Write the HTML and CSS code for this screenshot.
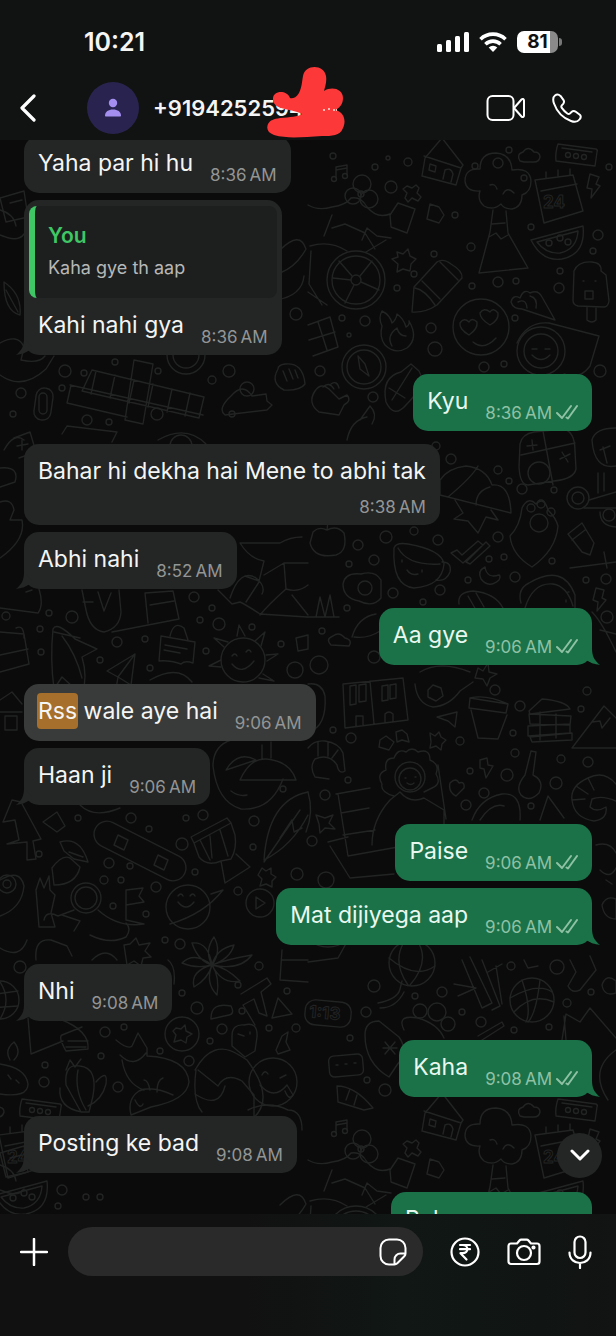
FILE: index.html
```html
<!DOCTYPE html>
<html lang="en">
<head>
<meta charset="utf-8">
<meta name="viewport" content="width=device-width, initial-scale=1">
<title>Chat</title>
<link rel="stylesheet" href="styles.css">
</head>
<body>
<div class="app">
  <header class="top">
    <div class="status">
      <span class="clock">10:21</span>
      <div class="status-icons">
        <svg width="32" height="20" viewBox="0 0 32 20" fill="#fff" aria-hidden="true"><rect x="0" y="12" width="5" height="8" rx="1.5"/><rect x="9" y="8" width="5" height="12" rx="1.5"/><rect x="18" y="4" width="5" height="16" rx="1.5"/><rect x="27" y="0" width="5" height="20" rx="1.5"/></svg>
        <svg width="28" height="20" viewBox="0 0 28 20" fill="none" stroke="#fff" stroke-width="3.6" aria-hidden="true"><path d="M1.5 7.2a18 18 0 0 1 25 0M6.4 12.2a11 11 0 0 1 15.200 0"/><path d="M14 20l-4.300-4.400a6.200 6.200 0 0 1 8.600 0z" fill="#fff" stroke="none"/></svg>
        <div class="battery"><span>81</span></div>
      </div>
    </div>
    <div class="bar">
      <button class="icon-btn back" aria-label="Back"><svg width="16" height="28" viewBox="0 0 16 28" fill="none" stroke="#fff" stroke-width="3.2" stroke-linecap="round" stroke-linejoin="round"><path d="M14 2L2 14l12 12"/></svg></button>
      <div class="avatar"><svg width="18" height="20" viewBox="0 0 18 20" fill="#a48ff0" aria-hidden="true"><circle cx="9" cy="5" r="4.200"/><path d="M1 17.500c0-3.800 3.500-6 8-6s8 2.200 8 6c0 .6-.4 1-1 1H2c-.6 0-1-.4-1-1z"/></svg></div>
      <h1 class="name">+9194252594
        <svg class="scribble" width="80" height="72" viewBox="0 0 80 72" aria-hidden="true"><path fill="#fd3839" d="M7 32c0-9 14-9 17-1 2 1 6 0 9-5 3-6 3-12 4-17C39-3 58-3 60 9c1 6-1 11-2 15 8-5 19-2 19 7 0 6-3 9-7 12 9 3 10 12 7 18-3 8-11 8-21 8-19 1-34 3-48-1-6-2-8-6-6-11 2-4 6-5 12-6 10-1 18-1 22-4-3-2-8-3-13-4-8-2-16-3-16-11z"/><path d="M57 43h3m2-1h2m3 1h4" stroke="#ffb8b4" stroke-width="2" stroke-dasharray="2 1"/></svg>
      </h1>
      <button class="icon-btn" aria-label="Video call"><svg width="40" height="28" viewBox="0 0 40 28" fill="none" stroke="#fff" stroke-width="2" stroke-linejoin="round"><rect x="1.500" y="2" width="26" height="24" rx="5"/><path d="M28 14l7.500-8.500c1-1 2.500-.6 2.500 1v15c0 1.600-1.500 2-2.500 1z"/></svg></button>
      <button class="icon-btn call" aria-label="Voice call"><svg width="30" height="30" viewBox="0 0 30 30" fill="none" stroke="#fff" stroke-width="2" stroke-linejoin="round"><path d="M3 2.500C1 4 .8 7 2 10.500c3 8.500 9 14.500 17 17.500 3.500 1.300 6.500 1 8.500-1.500 1.600-2 1.600-3.500.3-4.700l-4-3c-1.500-1.100-3-1-4.300.2l-1.600 1.600c-.8.700-1.700.6-2.600-.1-2.200-1.600-4-3.400-5.500-5.600-.6-.9-.7-1.700 0-2.500l1.400-1.500c1-1.200 1.100-2.600.2-4l-2.900-4C6.500 1.200 4.700 1.200 3 2.500z"/></svg></button>
    </div>
  </header>

  <main class="chat">
    <svg class="wallpaper" viewBox="0 140 616 1074" preserveAspectRatio="xMidYMin slice" aria-hidden="true">
      <defs>
        <g id="band">
          <path d="M425 158l17-20 21 27-2 3-37-12M425 158l-3 18 34 9 5-17M430 164l6 2-1 6-6-2zM443 179l2-9q6-3 8 4l-2 8"/>
          <path d="M558 144l38 5q2 1 1 3l-2 14-39-5q-1-8 2-17zM562 148l30 4"/><circle cx="568" cy="155" r="2.500"/><circle cx="576" cy="156" r="2.500"/><circle cx="584" cy="157" r="2.500"/>
          <path d="M520 161q-4-7 3-9 5-7 11 0 6 0 6 5-1 5-6 5h-10z"/>
          <path d="M336 178v-11l11-2v10M336 170l11-2"/><circle cx="334" cy="179" r="2.500"/><circle cx="345" cy="176" r="2.500"/>
          <path d="M407 186l5 2 4-3 3 3-2 5 4 4-3 4-6-3-4 4-3-4 2-5-4-4z"/>
          <circle cx="362" cy="184" r="9"/><circle cx="353" cy="196" r="8"/><circle cx="369" cy="199" r="9"/><circle cx="361" cy="194" r="3"/>
          <path d="M480 191q-14 1-15-10 0-13 15-12 0-16 16-16 15 1 16 17 18-3 19 11 0 11-9 14 0 12-10 14-8 0-11-5-8 7-17 2-7-6-4-15zM490 185q5-2 7 4M503 194q4-8 11-1"/>
          <path d="M493 210l-3 22-11 41 49-5-20-35-2-22M492 224l13-1M489 237l7-4 5 6 7-4"/>
          <path d="M535 180l38-5 10 36-39 12zM541 191l36-7M546 178v-6M558 176v-6M570 175v-6"/><text x="543" y="208">24</text>
          <path d="M590 174l9 3-3 7 4 2-9 12 1-9-5-1z"/>
          <path d="M531 240l52-14q3 28-21 33-20 3-31-19zM537 242l41-11q-1 18-18 22-14 1-23-11z"/><circle cx="549" cy="243" r="3"/><circle cx="560" cy="238" r="3"/><circle cx="568" cy="242" r="3"/>
          <path d="M308 205q10 6 24 2 14-2 19-9 10-2 16 9 10 12 23 7M390 215l8-12 17 6-8 24-16-6zM332 215l-8 21M332 228l13-4 20 9 10 16M362 240l5-12 10 8 14 2"/>
          <circle cx="356" cy="280" r="29"/><circle cx="356" cy="280" r="24"/><circle cx="356" cy="280" r="5"/><path d="M352 276l-13-15M360 276l12-15M361 282l18 8M354 285l-9 18M351 280l-18-2M310 246q20-6 37 5M311 251l-2 33 13 21M308 292l19 13M366 252l20-12"/>
          <path d="M412 312l2-25 23-25q6-4 14 2 12 7 11 14l-25 27q-12 8-25 7zM415 288q10 2 20 17M422 281l18 18M440 262l18 18"/>
          <path d="M430 204l9 3 5 8-5 8-12-4zM397 252l6 2 5-5 2 7 6 3-5 5-1 7-7-2-6 3 1-8-6-5 6-2z"/>
          <path d="M573 300l1-29q4-10 18-9 10 1 9 9l5 4 3 26q-1 6-5 6l-26-1q-5-1-5-6zM587 307v13q5 4 9 0v-13M585 291h8v8h-8zM583 281h1M595 281h1"/>
          <path d="M511 302q2-8 9-4 4-10 10-5 8-4 12 4l13 23-33-11q-9 0-11-7zM518 302q8-4 9 6M530 296q8 2 6 12"/>
          <circle cx="481" cy="327" r="28"/><path d="M469 335q-10-6-9-12 4-6 9-1 3-5 8 0 1 7-8 13zM490 325q-10-6-10-12 4-6 10-1 3-5 8 1 1 7-8 12zM473 342q11 9 23-4"/>
          <path d="M382 326q-4-8 0-15 8 4 10 12 4-3 5-9 7 5 9 13 4-2 3-6 10 17-2 27-12 7-22-3-6-8-3-19zM392 346q-6-10 5-18 2 8 9 8"/>
          <path d="M308 325l22-8 8 30-25 9M309 340l26-8M318 322l9 28"/>
          <circle cx="364" cy="367" r="22"/><circle cx="364" cy="367" r="17"/><path d="M358 356l7 8 4 12-9-7z"/>
          <path d="M315 391q6-9 14-2l10 10 8-4q5 6-3 10l-5 10-20-3q-12-9-4-21zM323 387q6-6 11 2M331 384q6-4 8 4"/>
          <circle cx="541" cy="351" r="24"/><circle cx="541" cy="351" r="17"/><path d="M517 343q10-22 32-20l50 13-9 30q-10 14-26 8M532 349h5M545 349h5M532 355q9 9 18 0"/>
          <path d="M386 402q-5-25 15-30l10-8 8 7q8 13-13 34-12 14-20-3zM392 400l20-32M389 388l16 10"/>
          <path d="M360 420l10-14q8 8 2 18M347 440q4-20 20-23"/>

          <path d="M92 370l112 27-5 21-117-27zM96 371l-5 23M115 375l-5 23M134 380l-5 23M153 384l-5 23M172 389l-5 23M190 393l-5 23M134 360l19 4-10 60-18-4zM70 385l133 30M71 385l-4 18 60 14"/>
          <rect x="35" y="388" width="17" height="32" rx="8" transform="rotate(8 43 404)"/><rect x="39" y="393" width="8" height="21" rx="4"/>
          <path d="M0 343q18-10 24 4l-3 13q18 4 24-4M0 375q22 16 46-6l8-13M0 235q18 8 24-1M4 282q18 12 16 33-16-4-16-33zM6 290l12 22"/>
          <circle cx="186" cy="355" r="19"/><circle cx="186" cy="355" r="13"/><path d="M280 250q20-20 26-1-10 18-26 24M276 300q26-4 28-24"/>
          <path d="M278 369q-8 14 6 21 16 1 21-6-2-22-20-20-7 1-7 5zM283 371l4 10M289 369l4 10M295 370l3 8"/>
          <path d="M231 396q12-14 21 0l14-2 1 7 5 4-5 5-42 5q-8-6 6-19z"/><circle cx="247" cy="389" r="7"/><path d="M0 198l24-7 4 26-22 5zM10 203l12-3"/><path d="M0 210q14 4 16 16"/>
          <path d="M158 440q28-16 48 4M62 434l5-8 50 6-5 10M14 438l16-6 6 20-17 6M22 440v10M17 446l11-2"/><circle cx="181" cy="446" r="11"/>
        </g>
      </defs>
      <g class="doodle">
        <use href="#band"/><use href="#band" y="955"/><use href="#band" x="-536" y="955"/>
        <path d="M0 468q20-2 15 14l-15 5M0 502q12-4 14 8l-4 10h12q4 20-22 38M4 450q10-18 20-10"/>
        <path d="M440 480q8-12 26-14 20 2 26 19 18-2 19 28l-71-18zM448 497q24-20 30-31M490 487q-14 4-14 18M455 500l8 13-9 6 14 2 10 12 8-16 12 3-7-10"/>
        <path d="M520 444q2-10 14-12l29-3q12 2 12 22l1 18q-2 10-22 12l-26 4q-8 0-9-18zM521 455l54-12M543 431l10 54M527 446l10-1M532 440l1 10M560 459l10-5M562 452l6 10"/><circle cx="539" cy="473" r="11"/>
        <path d="M592 440q3-12 24-12M592 440q2 30 24 26M603 447l4 16M600 450l10-4"/>
        <circle cx="578" cy="498" r="11"/><circle cx="578" cy="498" r="6"/><path d="M589 500l27-8M598 473v20M604 473v18M584 508h32M600 512q0 14 16 15"/><circle cx="609" cy="515" r="6"/>
        <path d="M510 536q10-10 12-28 6-12 14-4 8-8 12 6 8 8 10 16-2 24-26 41-20-12-22-31z"/><circle cx="539" cy="523" r="9"/><circle cx="531" cy="508" r="4"/><circle cx="541" cy="504" r="4"/><circle cx="551" cy="512" r="4"/>
        <path d="M394 548q2-6 14-4 34 6 36 20-2 22-30 24-22-2-20-40zM398 548q10 18 42 16M442 562q10 0 8 10-4 10-14 8"/><path d="M402 560v2M422 570v2M407 570q4 6 11 4"/>
        <path d="M451 553l6-3 5 5 16-14 5 4-20 18zM466 562l20-20 4 4-20 18z"/><path d="M485 567q-8 4-4 12 8 10 18 1 2-4 0-5-12 4-14-8z"/>
        <path d="M343 584q2-12 18-10 14-4 20 6v18q-8 10-22 3-16-3-16-17z"/><circle cx="365" cy="588" r="7"/><path d="M313 532q6-6 14-2 10-5 17 3 4 18-8 22-22 4-26-12zM327 530l1-9 6 1"/>
        <path d="M521 603q-4-14 8-20 34-20 46 12v20M525 608q8-26 28-24 14 2 20 22M566 600v2M568 592h1"/><path d="M568 534l14-11 12 20-4 12-8-3zM572 540l13-10M570 568l46-6M604 552l3 16"/><path d="M459 604q-2-12 14-13 22 2 30 17M468 596l8 14M476 593l8 14"/>
        <path d="M596 588l8 2-2 8 4 2-9 11 1-9-5-2zM352 637q6-20 24-23M354 637q14 2 26-6M307 617h32M316 617l4-20 5 20 5-22 4 22"/><path d="M331 645q-6-6 2-9 6-5 12 2 8 2 4 8z"/><circle cx="319" cy="665" r="9"/><path d="M592 612q10 10 24 40M600 630l16 4M420 672q20-12 50 0M478 668l5 3 5-8 1 9 8 2-7 4-3 8-4-7-8-1z"/>

        <path d="M0 608l38 5q6-8 1-24M26 592l6-2M82 590l4 20q4 20 18 22 16-4 17-20l-2-22M83 602h10M98 592l6 19 7-18M112 632l67-13-6-28-28 2 3 30M150 605l24-4"/>
        <path d="M218 590l14 14 8-2q8 4 20 12l47 3M240 543h40q10-6 22-6M240 543q10 16 24 18l-5 20-14-5M259 582l-13 20M264 575l20-12 2 26q-18 16-26 26M284 563h24M286 589q12 4 22-4M292 595l16 20M230 598q10-30 26-20 10 8 6 16"/>
        <path d="M0 632l24 2 5 30-29 8M0 655l28-6M16 628q8-4 8 10"/><path d="M53 629q4-8 22 10l22 10-15 8q6 20 0 38l-20-18-8 12q-4-30-1-60zM62 636q14 18 20 42M54 632l26 6M75 686l5 7"/>
        <path d="M161 636l34 6-2 21q-8-3-12 1-12-4-22-3zM170 636q4-16 14-8l4 12M165 645l22 4M164 650l16 3"/><path d="M107 671l28-17-4 31-13-8zM118 677l17-23M118 677l-2 12"/>
        <circle cx="243" cy="660" r="22"/><path d="M232 656q3-4 5 0M246 652q3-4 5 0M232 664q10 12 22-3M237 636l2-11 6 11M255 641l10-9-4 14M266 655l12-1-11 7M263 674l11 7-15-3M221 660l-12 6 12 1M224 647l-10-9 14 4"/>
        <path d="M296 638l12-3v14l-10 2zM150 680q28-16 42 2"/>

        <path d="M308 684q14-2 17 12 2 30-16 36M343 684l60-6 5 42-63 8zM370 681l4 43M350 686l6-1v19l-6 1zM359 685l7-1v17l-7 1zM382 686l6-1v15l-6 1zM390 685l6-1v14l-6 1zM356 726v-10h7v9M385 722v-8q4-4 8 0v8"/>
        <path d="M415 684q2 20 18 23 16-1 27-16l13-9M428 690l5-5 8 3 2 8-7 5-8-4z"/><path d="M470 698l38 6-2 9-37-5zM471 710l7 28 20 1 9-24M470 698q16-4 38 6"/>
        <path d="M529 711l13-12q24 2 28 10l-40 5zM529 714l42 2-1 9-40-1zM528 726l42-2v9l-42 3zM530 737l42-4v7l-40 2zM540 712v28M556 714v24"/><path d="M572 748l32-42 12 12M572 748h44M592 722l8-1 2 7 8-10M437 717l20-5-2 15-7-6z"/>
        <path d="M308 748q6-8 17-7 14 2 18 12l2 18q-6 4-8-6-8-12-22-6-6 8 0 18l14 2M318 742v14M328 742v14M338 750l-6 8"/><circle cx="410" cy="777" r="15"/><circle cx="410" cy="779" r="11"/><path d="M394 796q-14-4-12-12-6-10 4-14-2-12 8-12 4-10 12-6 6-6 12 0 12-4 12 8 10 4 6 14 6 10-4 14l-8 4M390 800l10-8q10 12 24 6l20 12v14M390 800q-18 20-18 45M336 794l34-6M338 794l10 62 50-9M341 813l28-5M343 835l32-5M330 846l20 32 44-4M328 842l20-5M438 765l8 54"/>
        <path d="M405 778h1M415 777h1M407 783q4 3 7 0"/><path d="M380 740l6-4 8 6-5 8-10-3zM396 732l6-2 5 4 2 8-7-2-5 2zM430 733l5 3 4-4 2 5 5 3-4 4-1 6-5-4-6 2 1-6z"/>
        <path d="M531 751l5 1-3 23q12 6 6 18-10 10-18 2-6-8 4-20zM472 820q8-22 30-26 20-2 18 26M480 820q12-18 24-14M540 820l8-24 16 22"/><path d="M616 784q-12-14-28-6-18 8-16 22 2 18 22 21 14-2 12-14-10 6-16 0l2-8q10-4 24 2M576 786l12 8M588 778l6 12M572 800l13-1"/>
        <path d="M308 792q6 20-2 40M316 815l9 3 8-3-4 8 6 6-10-1-5 5-1-9z"/>
        <path d="M480 760l7-2 1 7 5 1-7 12-2-9-4-1zM450 783q6-6 9 0 6-2 5 5l-8 8q-8-4-6-13z"/>

        <path d="M213 766q0-20 18-26M213 766q4 36 28 43 30 2 42-30M240 780q10-22 26-21 24 2 30 21zM226 770l30-10q-18-10-30 10zM231 791q8 6 16 4M262 745v14M271 742v16"/>
        <path d="M0 700l12-8 10 12M0 712h22M5 716h12v14h-12z"/><path d="M12 800l-9 22 12-2 4 20-12 4 20-2v18l9-1-3-18 8-2-20-37zM43 822l14-10 8 14-8 6zM80 805q14 14 40 3"/>
        <path d="M52 868q10-14 18-10l10 9q-4 18-26 18zM60 842q20-6 28 20l-14-3-10-8zM69 852l14 5"/><rect x="90" y="838" width="100" height="26" rx="13" transform="rotate(27 140 851)"/><path d="M118 835l10 5-4 10-10-5zM158 855l10 5-4 10-10-5z"/>
        <path d="M191 837l36-19 4 5-37 20zM194 843l5 14q8 10 22 4l10-2q6-10 4-24l-4-12M221 861l4 22 25-16-14-13M200 840l10 20M210 836l2 22M220 830l8 26"/><path d="M308 792q-40 8-44 68 28-14 44-45M264 862l36-52M280 838l12-18 2 12 8-4"/>
        <path d="M0 880q20-12 24 6-2 22-24 30"/><circle cx="7" cy="884" r="9"/><circle cx="7" cy="884" r="4"/><path d="M36 890l4-12 4 10 5-12 1 14 5 5-4 18 4 14h-16zM44 920q2-10 14-4l16-6"/><circle cx="86" cy="898" r="15"/><circle cx="86" cy="898" r="11"/><path d="M98 910q20 18 46 14l-18-4v-30l17-2-4 8 5 6-18 3M62 915l18 6-6 10"/>
        <circle cx="188" cy="907" r="22"/><path d="M170 924q34-10 53-34l-12 4M178 896q3-4 5 0M190 896q3-4 5 0M178 902q8 10 16 0"/><circle cx="260" cy="903" r="14"/><path d="M256 897l9 6-9 6zM262 868l4 3 5-3v6l5 3-4 4v6l-6-3-6 2 2-7-4-4z"/>

        <path d="M0 948q20 12 27-8M36 960q-2-22 15-20l16 6 5 10M90 935q20 10 36 2 6-8 0-14M92 960q14-14 25 0M124 945l6-1 6-6 3 7 11-2-5 8 6 6-8 1-2 8-7-5-7 4z"/>
        <path d="M212 965q-8-14 2-28 8 14-2 28 4-16 22-20-4 14-22 20 16-6 40-10-12 16-40 10 14 2 28 16-18 4-28-16 8 12 5 30-12-12-5-30-4 14-18 22-4-16 18-22-16 4-30-2 12-12 30 2-14-4-20-22 16-2 20 22z"/>
        <circle cx="0" cy="1000" r="19"/><path d="M0 982q12 18 0 37M-10 995l28-4M-10 1008l28-2M168 960q8 6 6 24"/><path d="M282 950l-2 30 28 2M282 960h26M241 994l26-16 4 6-10 8 6 24-8-3-5-14-11 6 12 20M272 1018l6-20 14 16zM211 1018q0-16 20-12 4 8-2 9l-18 4z"/>
        <path d="M28 1018l3 36 32-13M40 1020l20-1q30 12 28 30l-22 2q-8-14-4-16l20-8M68 1041h20M66 1047h20"/><circle cx="182" cy="1034" r="17"/><path d="M176 1028l5 1 4-4 1 6 6 3-5 3-1 6-5-3-7 2 2-7-3-4z"/>
        <path d="M116 1040q12 10 16 6l6-13 9 15v8q40 2 42 26-2 18-38 25l-20 8q-4-16 8-24 12-6 34 4M120 1055q14 14 26-2M122 1060q4 24 22 30M150 1090q-2-10-6-10M157 1092q0-12 6-14M135 1100q5 10 8 4"/>
        <path d="M66 1085q-2-22 14-19 18 2 13 30l-4 16h-8zM60 1088q-2 20 22 24M96 1082q12-14 10 2-4 16-18 22M66 1070l4-10 5 7 6-8M78 1070q-4 20 8 40"/><path d="M0 1064q26 4 28 20 0 14-28 10M10 1060q-6-10 4-18 8 10 0 18M8 1075l3 4M16 1080l3 3"/>
        <path d="M195 1070q18-32 44-15l8 5q30 40 4 60M196 1070q-4 30 6 42M198 1070l20 16q8-14 24-5l12 14v22M195 1094q24 16 30-8M232 1036q0-12 12-11 14-4 13 12l-2 14-10 6-13-11zM238 1034l6 2M250 1032v2"/><circle cx="273" cy="1082" r="24"/><path d="M262 1075q3-6 6-1M280 1078l6-3M260 1085q14 16 27 0l6 10q-4 6-8-4M248 1110q20-10 40 0 14 0 14 20M276 1050l6-14 6-4-2 10 4 8-12 4z"/>

        <circle cx="412" cy="963" r="23"/><circle cx="532" cy="1000" r="22"/><path d="M389 958q26 22 46 8M404 942q-12 20 4 43M418 942q12 20-8 43M510 998q28-16 42-6M514 1012q18-20 40-10M522 980q10 30 4 42M540 980q-4 34-12 42M378 1003q20-4 22-14l2-8M380 1008q16 0 24-16"/>
        <path d="M462 960l20 48 10-5-22-46M482 960l18 46-8 4M496 966l6 38M458 996l18-8-22-4M488 972l14-8M524 960l4 8 10-2M570 960l6 12-8 14q4 8 12 4l16-20-6-14"/>
        <rect x="305" y="1001" width="46" height="25" rx="10" transform="rotate(5 328 1014)"/><text x="309" y="1019" transform="rotate(5 328 1014)">1:13</text><path d="M308 940q20 14 40 0l-10 18-30 4M365 1035q0-14 14-14l20 16q10 14-2 28l-8 12q-24-14-24-42zM383 1048h14M385 1042l10 12M395 1042l-10 12"/><rect x="329" y="1055" width="34" height="21" rx="5" transform="rotate(-5 346 1065)"/><path d="M336 1065h2M345 1064h2M354 1063h2M337 1086q18 0 36 22l-9 2-26-8zM346 1100l4-11M354 1105l3-10"/>
        <circle cx="420" cy="1011" r="7"/><circle cx="437" cy="1012" r="9"/><circle cx="448" cy="1024" r="7"/><path d="M404 1030q-8-16 14-12 20 6 26 20M478 1036l24-14 2 4-22 14M562 1040l4-26 14 8 10-14 26 30M564 1016l2 24M602 985q4-12 14-4v12q-12 4-14-8M616 1050q-28 20-8 50"/>
        <path d="M596 845q14-4 20 8M600 870q10 10 16-2M602 905q4-10 14-6v20q-12 0-14-14M606 880l6 4"/>
      </g>
      <g class="dots">
        <circle cx="333" cy="156" r="3"/><circle cx="388" cy="158" r="2"/><circle cx="408" cy="162" r="4"/><circle cx="475" cy="166" r="3"/><circle cx="498" cy="163" r="5"/><circle cx="509" cy="150" r="3"/><circle cx="375" cy="167" r="3"/><circle cx="391" cy="187" r="6"/><circle cx="524" cy="178" r="3"/><circle cx="609" cy="167" r="3"/><circle cx="455" cy="215" r="3"/><circle cx="471" cy="247" r="4"/><circle cx="531" cy="227" r="3"/><circle cx="598" cy="235" r="5"/><circle cx="593" cy="251" r="3"/><circle cx="414" cy="274" r="3"/><circle cx="397" cy="288" r="3"/><circle cx="434" cy="254" r="3"/><circle cx="472" cy="286" r="3"/><circle cx="498" cy="282" r="5"/><circle cx="516" cy="281" r="3"/><circle cx="559" cy="288" r="5"/><circle cx="560" cy="271" r="3"/><circle cx="342" cy="318" r="3"/><circle cx="365" cy="321" r="5"/><circle cx="431" cy="328" r="5"/><circle cx="435" cy="349" r="7"/><circle cx="349" cy="335" r="2"/><circle cx="484" cy="367" r="5"/><circle cx="504" cy="364" r="3"/><circle cx="320" cy="371" r="5"/><circle cx="373" cy="397" r="5"/><circle cx="600" cy="371" r="6"/><circle cx="515" cy="318" r="3"/>
        <circle cx="65" cy="371" r="6"/><circle cx="84" cy="373" r="3"/><circle cx="115" cy="362" r="3"/><circle cx="158" cy="371" r="3"/><circle cx="229" cy="371" r="6"/><circle cx="212" cy="380" r="4"/><circle cx="21" cy="393" r="5"/><circle cx="62" cy="388" r="3"/><circle cx="157" cy="414" r="6"/><circle cx="87" cy="420" r="5"/><circle cx="109" cy="422" r="3"/><circle cx="13" cy="414" r="3"/><circle cx="296" cy="314" r="6"/><circle cx="232" cy="414" r="3"/>
        <circle cx="436" cy="446" r="4"/><circle cx="451" cy="459" r="5"/><circle cx="498" cy="470" r="4"/><circle cx="509" cy="481" r="3"/><circle cx="522" cy="489" r="5"/><circle cx="554" cy="490" r="3"/><circle cx="386" cy="537" r="6"/><circle cx="414" cy="531" r="4"/><circle cx="358" cy="545" r="5"/><circle cx="438" cy="540" r="5"/><circle cx="498" cy="537" r="5"/><circle cx="374" cy="560" r="5"/><circle cx="349" cy="564" r="3"/><circle cx="489" cy="559" r="3"/><circle cx="504" cy="557" r="3"/><circle cx="552" cy="561" r="3"/><circle cx="468" cy="580" r="3"/><circle cx="515" cy="577" r="5"/><circle cx="393" cy="593" r="5"/><circle cx="440" cy="590" r="5"/><circle cx="423" cy="602" r="3"/><circle cx="586" cy="580" r="3"/><circle cx="606" cy="579" r="5"/><circle cx="607" cy="617" r="6"/><circle cx="374" cy="657" r="6"/><circle cx="322" cy="631" r="3"/><circle cx="347" cy="608" r="3"/>
        <circle cx="72" cy="617" r="6"/><circle cx="49" cy="613" r="3"/><circle cx="6" cy="616" r="4"/><circle cx="194" cy="597" r="5"/><circle cx="212" cy="608" r="3"/><circle cx="219" cy="624" r="6"/><circle cx="200" cy="620" r="3"/><circle cx="40" cy="629" r="3"/><circle cx="117" cy="642" r="5"/><circle cx="145" cy="639" r="3"/><circle cx="41" cy="652" r="3"/><circle cx="100" cy="660" r="3"/><circle cx="206" cy="651" r="3"/><circle cx="252" cy="627" r="3"/><circle cx="281" cy="644" r="3"/><circle cx="295" cy="670" r="8"/><circle cx="150" cy="668" r="3"/>
        <circle cx="351" cy="738" r="5"/><circle cx="333" cy="730" r="3"/><circle cx="460" cy="741" r="4"/><circle cx="495" cy="690" r="5"/><circle cx="520" cy="706" r="5"/><circle cx="513" cy="733" r="3"/><circle cx="587" cy="691" r="4"/><circle cx="581" cy="709" r="3"/><circle cx="515" cy="753" r="4"/><circle cx="561" cy="759" r="4"/><circle cx="588" cy="762" r="5"/><circle cx="507" cy="775" r="6"/><circle cx="556" cy="783" r="6"/><circle cx="484" cy="793" r="5"/><circle cx="466" cy="805" r="5"/><circle cx="470" cy="771" r="3"/><circle cx="325" cy="795" r="5"/><circle cx="348" cy="780" r="3"/><circle cx="531" cy="806" r="3"/><circle cx="312" cy="841" r="5"/><circle cx="326" cy="880" r="8"/>
        <circle cx="131" cy="818" r="5"/><circle cx="78" cy="818" r="3"/><circle cx="203" cy="815" r="5"/><circle cx="186" cy="818" r="3"/><circle cx="254" cy="821" r="5"/><circle cx="149" cy="829" r="3"/><circle cx="182" cy="844" r="6"/><circle cx="253" cy="847" r="3"/><circle cx="109" cy="863" r="5"/><circle cx="39" cy="854" r="3"/><circle cx="130" cy="866" r="3"/><circle cx="104" cy="880" r="4"/><circle cx="121" cy="880" r="3"/><circle cx="156" cy="887" r="5"/><circle cx="195" cy="872" r="3"/><circle cx="238" cy="891" r="4"/><circle cx="297" cy="874" r="6"/><circle cx="113" cy="906" r="3"/><circle cx="146" cy="914" r="3"/><circle cx="283" cy="789" r="3"/>
        <circle cx="180" cy="944" r="5"/><circle cx="165" cy="940" r="3"/><circle cx="20" cy="967" r="6"/><circle cx="259" cy="966" r="4"/><circle cx="238" cy="985" r="3"/><circle cx="182" cy="993" r="3"/><circle cx="197" cy="1008" r="6"/><circle cx="242" cy="1011" r="3"/><circle cx="287" cy="991" r="3"/><circle cx="105" cy="1032" r="5"/><circle cx="124" cy="1027" r="3"/><circle cx="101" cy="1056" r="3"/><circle cx="222" cy="1029" r="5"/><circle cx="210" cy="1041" r="3"/><circle cx="160" cy="1051" r="3"/><circle cx="189" cy="1061" r="5"/><circle cx="44" cy="1082" r="5"/><circle cx="118" cy="1087" r="5"/><circle cx="45" cy="1065" r="3"/><circle cx="269" cy="1028" r="3"/><circle cx="296" cy="1028" r="4"/>
        <circle cx="374" cy="986" r="6"/><circle cx="442" cy="992" r="5"/><circle cx="415" cy="996" r="3"/><circle cx="366" cy="1012" r="5"/><circle cx="462" cy="1012" r="3"/><circle cx="481" cy="1022" r="5"/><circle cx="511" cy="966" r="4"/><circle cx="557" cy="967" r="7"/><circle cx="567" cy="1003" r="4"/><circle cx="591" cy="992" r="3"/><circle cx="514" cy="1030" r="3"/><circle cx="549" cy="1027" r="3"/><circle cx="385" cy="1090" r="6"/><circle cx="367" cy="1080" r="3"/><circle cx="350" cy="1038" r="3"/><circle cx="62" cy="1190" r="5"/><circle cx="58" cy="1206" r="3"/><circle cx="86" cy="1197" r="3"/><circle cx="100" cy="1197" r="3"/>
      </g>
    </svg>

    <div class="messages">
      <div class="msg in"><p>Yaha par hi hu</p><time>8:36&#8239;AM</time></div>
      <div class="msg in quoted tail">
        <blockquote class="quote"><strong>You</strong><span>Kaha gye th aap</span></blockquote>
        <p>Kahi nahi gya</p><time>8:36&#8239;AM</time>
      </div>
      <div class="msg out"><p>Kyu</p><time>8:36&#8239;AM</time><svg class="ticks" viewBox="0 0 22 16"><path d="M1 9l5 5L15 2M10.500 13.500L12 14.500 21 2"/></svg></div>
      <div class="msg in stacked turn"><p>Bahar hi dekha hai Mene to abhi tak</p><time>8:38&#8239;AM</time></div>
      <div class="msg in tail"><p>Abhi nahi</p><time>8:52&#8239;AM</time></div>
      <div class="msg out tail"><p>Aa gye</p><time>9:06&#8239;AM</time><svg class="ticks" viewBox="0 0 22 16"><path d="M1 9l5 5L15 2M10.500 13.500L12 14.500 21 2"/></svg></div>
      <div class="msg in found"><p><mark>Rss</mark> wale aye hai</p><time>9:06&#8239;AM</time></div>
      <div class="msg in tail"><p>Haan ji</p><time>9:06&#8239;AM</time></div>
      <div class="msg out"><p>Paise</p><time>9:06&#8239;AM</time><svg class="ticks" viewBox="0 0 22 16"><path d="M1 9l5 5L15 2M10.500 13.500L12 14.500 21 2"/></svg></div>
      <div class="msg out tail"><p>Mat dijiyega aap</p><time>9:06&#8239;AM</time><svg class="ticks" viewBox="0 0 22 16"><path d="M1 9l5 5L15 2M10.500 13.500L12 14.500 21 2"/></svg></div>
      <div class="msg in tail"><p>Nhi</p><time>9:08&#8239;AM</time></div>
      <div class="msg out tail"><p>Kaha</p><time>9:08&#8239;AM</time><svg class="ticks" viewBox="0 0 22 16"><path d="M1 9l5 5L15 2M10.500 13.500L12 14.500 21 2"/></svg></div>
      <div class="msg in tail"><p>Posting ke bad</p><time>9:08&#8239;AM</time></div>
      <div class="msg out"><p>Bahar</p><time>9:08&#8239;AM</time><svg class="ticks" viewBox="0 0 22 16"><path d="M1 9l5 5L15 2M10.500 13.500L12 14.500 21 2"/></svg></div>
    </div>
    <button class="jump" aria-label="Scroll to latest"><svg width="20" height="13" viewBox="0 0 20 13" fill="none" stroke="#fff" stroke-width="3" stroke-linecap="round" stroke-linejoin="round"><path d="M2 2l8 8 8-8"/></svg></button>
  </main>

  <footer class="composer">
    <button class="icon-btn" aria-label="Attach"><svg width="28" height="28" viewBox="0 0 28 28" stroke="#fff" stroke-width="2.500" stroke-linecap="round"><path d="M14 1v26M1 14h26"/></svg></button>
    <div class="field">
      <input type="text" aria-label="Message">
      <button class="icon-btn" aria-label="Stickers"><svg width="28" height="28" viewBox="0 0 28 28" fill="none" stroke="#fff" stroke-width="2" stroke-linejoin="round"><path d="M15.500 26.500H10a8.500 8.500 0 0 1-8.500-8.500V10A8.500 8.500 0 0 1 10 1.500h8a8.500 8.500 0 0 1 8.500 8.500v5.500c0 1-.4 2-1.200 2.800l-7 7c-.8.8-1.800 1.200-2.800 1.200zM15.500 26v-4.500a6 6 0 0 1 6-6h5"/></svg></button>
    </div>
    <button class="icon-btn" aria-label="Payments"><svg width="30" height="30" viewBox="0 0 30 30" fill="none" stroke="#fff" stroke-width="2.200" stroke-linecap="round" stroke-linejoin="round"><circle cx="15" cy="15" r="13.500"/><path d="M10 8h10M10 12.200h10M12.500 8c6.500 0 6.500 8.200 0 8.200H10.500l6 6.300"/></svg></button>
    <button class="icon-btn" aria-label="Camera"><svg width="34" height="28" viewBox="0 0 34 28" fill="none" stroke="#fff" stroke-width="2.200" stroke-linejoin="round"><path d="M4 5.500h6l2.500-3c.5-.6 1-.9 1.800-.9h5.400c.8 0 1.300.3 1.800.9l2.500 3h6c1.500 0 2.500 1 2.500 2.500v15.500c0 1.500-1 2.500-2.500 2.500H4c-1.500 0-2.500-1-2.500-2.500V8c0-1.500 1-2.500 2.500-2.500z"/><circle cx="17" cy="15" r="7"/><circle cx="26.500" cy="9.500" r="1" fill="#fff"/></svg></button>
    <button class="icon-btn" aria-label="Voice message"><svg width="24" height="34" viewBox="0 0 24 34" fill="none" stroke="#fff" stroke-width="2.200" stroke-linecap="round"><rect x="6.500" y="1.500" width="11" height="21.500" rx="5.500"/><path d="M1.500 17.500c0 14 21 14 21 0M12 28v5"/></svg></button>
  </footer>
</div>
</body>
</html>
```
FILE: styles.css
```css
* { box-sizing: border-box; }

body {
  margin: 0;
  background: #0b0b0b;
  color: #f4f5f4;
  font-family: Inter, Roboto, sans-serif;
}

p, h1, blockquote { margin: 0; }

button {
  padding: 0;
  border: 0;
  background: none;
  color: inherit;
}

svg { display: block; flex: none; }

.app {
  display: flex;
  flex-direction: column;
  height: 100vh;
}

.icon-btn { display: flex; flex: none; }

/* Header */
.top {
  flex: none;
  padding: 28px 34px 6px 20px;
  background: #111212;
}

.status {
  display: flex;
  align-items: center;
  justify-content: space-between;
  padding: 0 24px 0 64px;
}

.clock {
  font-size: 25px;
  font-weight: 600;
  line-height: 28px;
}

.status-icons {
  display: flex;
  align-items: center;
  gap: 10px;
}

.battery {
  position: relative;
  width: 41px;
  border-radius: 7px;
  background: linear-gradient(90deg, #fff 81%, #8a8a8a 81%);
  color: #111;
  font-size: 19px;
  font-weight: 700;
  line-height: 22px;
  text-align: center;
}

.battery::after {
  content: "";
  position: absolute;
  top: 7px;
  right: -4px;
  width: 3px;
  height: 8px;
  border-radius: 0 3px 3px 0;
  background: #777;
}

.bar {
  display: flex;
  align-items: center;
  margin-top: 26px;
}

.back { width: 67px; }

.avatar {
  display: flex;
  flex: none;
  align-items: center;
  justify-content: center;
  width: 52px;
  height: 52px;
  border-radius: 50%;
  background: #29244f;
}

.name {
  position: relative;
  flex: 1;
  padding-left: 14px;
  font-size: 22px;
  font-weight: 600;
  line-height: 28px;
}

.scribble {
  position: absolute;
  top: -27px;
  left: 127px;
}

.call { margin-left: 26px; }

/* Conversation */
.chat {
  position: relative;
  flex: 1;
  min-height: 0;
  overflow: hidden;
}

.wallpaper {
  position: absolute;
  inset: 0;
  width: 100%;
  height: 100%;
}

.doodle, .dots {
  fill: none;
  stroke: #222323;
  stroke-width: 1.4;
  stroke-linejoin: round;
  stroke-linecap: round;
}

.wallpaper text {
  font-size: 17px;
  font-weight: 700;
  stroke-width: 1;
}

.messages {
  position: relative;
  display: flex;
  flex-direction: column;
  gap: 7px;
  margin-top: -4px;
  padding: 0 24px;
}

.msg {
  position: relative;
  display: flex;
  align-items: flex-end;
  max-width: 80%;
  padding: 12px 14px 8px;
  border-radius: 15px;
}

.msg p {
  margin-bottom: 7px;
  font-size: 23px;
  line-height: 30px;
}

.msg time {
  margin-left: 17px;
  color: #939595;
  font-size: 17px;
  line-height: 20px;
  white-space: nowrap;
}

.in { align-self: flex-start; background: #242626; }
.out { align-self: flex-end; background: #1b7249; color: #e9f8ef; }
.out time { color: #8fc1a4; }
.tail { margin-bottom: 12px; }
.turn { margin-top: 6px; }
.found { background: #393b3a; }

.tail::after {
  content: "";
  position: absolute;
  right: -8px;
  bottom: 0;
  width: 18px;
  height: 20px;
  background: inherit;
  clip-path: path("M10 3C10 11 12 15 18 20C12 19 9 18 6 16L0 14Z");
}

.in.tail::after {
  right: auto;
  left: -8px;
  transform: scaleX(-1);
}

.stacked { flex-direction: column; }
.stacked p { margin-bottom: 11px; }

.quoted {
  display: grid;
  grid-template-columns: auto auto;
  align-items: end;
  padding-top: 6px;
}

.quote {
  display: flex;
  flex-direction: column;
  grid-column: 1 / -1;
  margin: 0 -9px 12px;
  padding: 16px 13px;
  border-left: 6px solid #3fc665;
  border-radius: 8px;
  background: #1d1f1f;
}

.quote strong {
  color: #3fc665;
  font-size: 21px;
  font-weight: 600;
  line-height: 28px;
}

.quote span {
  padding-top: 4px;
  color: #b6b8b7;
  font-size: 18px;
  line-height: 28px;
}

mark {
  margin: 0 -1px;
  padding: 4px 1px;
  border-radius: 4px;
  background: #a66f2b;
  color: inherit;
}

.ticks {
  width: 22px;
  height: 16px;
  margin: 0 0 3px 4px;
  fill: none;
  stroke: #8fc1a4;
  stroke-width: 2;
  stroke-linecap: round;
  stroke-linejoin: round;
}

.jump {
  position: absolute;
  right: 14px;
  bottom: 36px;
  display: flex;
  align-items: center;
  justify-content: center;
  width: 45px;
  height: 45px;
  border-radius: 50%;
  background: #242626;
}

/* Composer */
.composer {
  display: flex;
  flex: none;
  align-items: center;
  gap: 27px;
  padding: 13px 24px 60px 20px;
  background: linear-gradient(90deg, #111 40%, #101714 65%, #101513 88%, #121313);
}

.field {
  display: flex;
  flex: 1;
  align-items: center;
  height: 49px;
  margin-left: -7px;
  padding: 0 16px 0 20px;
  border-radius: 25px;
  background: #2a2a2a;
}

.field input {
  flex: 1;
  min-width: 0;
  border: 0;
  outline: 0;
  background: none;
  color: inherit;
  font: inherit;
}
```
